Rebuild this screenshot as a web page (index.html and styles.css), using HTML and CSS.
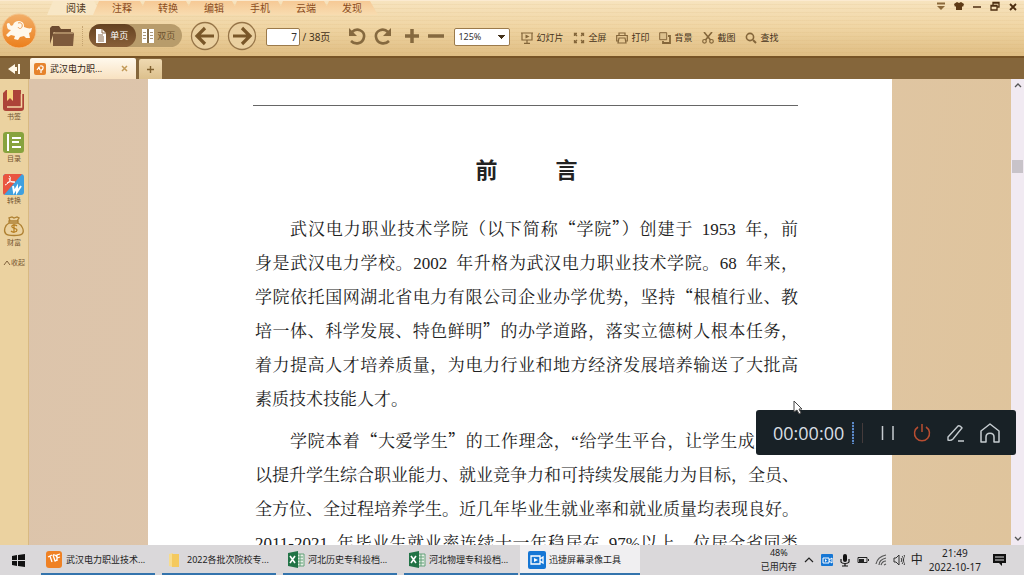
FILE: index.html
```html
<!DOCTYPE html>
<html lang="zh-CN">
<head>
<meta charset="utf-8">
<title>武汉电力职业技术学院</title>
<link rel="stylesheet" href="styles.css">
</head>
<body>
<div class="app">
  <header class="header">
    <button class="logo" aria-label="主菜单">
      <svg width="36" height="36" viewBox="0 0 36 36"><defs><linearGradient id="lg" x2="0" y2="1"><stop stop-color="#f2ae68"/><stop offset="1" stop-color="#ec7f1c"/></linearGradient></defs><circle cx="18" cy="18" r="17" fill="url(#lg)" stroke="#f3c48c"/><path fill="#fff8ec" d="M6 13c-1-3 2-4 3-2 0 2 2 2 3 1 1-4 6-5 9-3 2 1 2 3 2 5 3 1 5 2 8 1l-1 4-2 1 1 5-4 0-2-2-4 1-2 3-4-1 1-3-4-1-3 2-2-2 3-3 2-2c-2 0-4-1-4-4z"/><path d="M17 10c3-1 5 1 4 4-1 2-3 2-4 0" fill="none" stroke="#ee9a4d"/></svg>
    </button>
    <div class="header-main">
      <div class="title-row">
        <nav class="menu">
          <button class="menu-tab active">阅读</button><button class="menu-tab">注释</button><button class="menu-tab">转换</button><button class="menu-tab">编辑</button><button class="menu-tab">手机</button><button class="menu-tab">云端</button><button class="menu-tab">发现</button>
        </nav>
        <div class="window-buttons">
          <button aria-label="菜单"><svg width="10" height="10"><path d="M1 1.500h8v2H1zM1 5h8L5 9z" fill="#8c6a3c"/></svg></button>
          <button aria-label="换肤"><svg width="10" height="10"><path d="M3 1l2 1 2-1 3 2-1 3-1-1v4H2V5L1 6 0 3z" fill="#5d3a16"/></svg></button>
          <button aria-label="最小化"><svg width="10" height="10"><path d="M1 6h8" stroke="#4c2d10" stroke-width="1.500"/></svg></button>
          <button aria-label="还原"><svg width="10" height="10"><path d="M3 4V1.500h6V6H7M1 4.500h6V9H1zM1 5h6M3 2h6" fill="none" stroke="#4c2d10" stroke-width="1.300"/></svg></button>
          <button aria-label="关闭"><svg width="10" height="10"><path d="M2 3l6 6M8 3L2 9" stroke="#4c2d10" stroke-width="1.800"/></svg></button>
        </div>
      </div>
      <div class="toolbar">
        <button class="folder" aria-label="打开"><svg width="26" height="22"><path d="M1 19V3l2-2h7l2 3h10v3H5z" fill="#6d4b30"/><path d="M4 9l2-2h18l1 2-1 12H4z" fill="#7e5a3c"/><path d="M4 8h20" stroke="#d8b98a"/></svg></button>
        <span class="dots"></span>
        <div class="page-mode">
          <button class="mode on"><svg width="11" height="14"><path d="M0 0h6l4 4v10H0z" fill="#fff"/><path d="M6 0v4h4M2 6h5M2 8h6M2 10h6M2 12h6" fill="none" stroke="#8a6948"/></svg>单页</button>
          <button class="mode"><svg width="12" height="14"><path d="M0 0h5v14H0zM7 0h5v14H7z" fill="#fff"/><path d="M6 0v14" stroke="#4d3d28"/><path d="M1 3.500h3M1 6.500h3M1 9.500h3M8 3.500h3M8 6.500h3M8 9.500h3" stroke="#a8987c"/></svg>双页</button>
        </div>
        <button class="back" aria-label="上一页"><svg width="30" height="30"><circle cx="15" cy="15" r="13.500" fill="#ead0a0" stroke="#967548" stroke-width="1.300"/><path d="M24 15H8M15 7l-8 8 8 8" fill="none" stroke="#795729" stroke-width="3.200"/></svg></button>
        <button class="forward" aria-label="下一页"><svg width="30" height="30"><circle cx="15" cy="15" r="13.500" fill="#ead0a0" stroke="#967548" stroke-width="1.300"/><path d="M6 15h16M15 7l8 8-8 8" fill="none" stroke="#795729" stroke-width="3.200"/></svg></button>
        <label class="page-number"><input type="text" value="7" aria-label="页码"> / 38页</label>
        <button class="undo" aria-label="向左旋转"><svg width="18" height="18"><path d="M4 5c5-5 13-1 12 5-1 7-9 8-13 4" fill="none" stroke="#85693f" stroke-width="2.600"/><path d="M1 1v8h8z" fill="#85693f"/></svg></button>
        <button class="redo" aria-label="向右旋转"><svg width="18" height="18"><path d="M14 5C9 0 1 4 2 10c1 7 9 8 13 4" fill="none" stroke="#85693f" stroke-width="2.600"/><path d="M17 1v8H9z" fill="#85693f"/></svg></button>
        <button class="plus" aria-label="放大"><svg width="16" height="16"><path d="M1 8h14M8 1v14" stroke="#85693f" stroke-width="3.500"/></svg></button>
        <button class="minus" aria-label="缩小"><svg width="16" height="16"><path d="M0 8h16" stroke="#85693f" stroke-width="3.500"/></svg></button>
        <select class="zoom" aria-label="缩放"><option>125%</option></select>
        <div class="tools">
          <button><svg width="12" height="12"><path d="M0 1h12M1 1v7h10V1M6 8v3M3 11.300h6" fill="none" stroke="#84663a" stroke-width="1.200"/><path d="M4.500 2.500v4l4-2z" fill="#84663a"/></svg>幻灯片</button>
          <button><svg width="12" height="12"><path d="M4 1.500H1.500V4M8 1.500h2.500V4M4 10.500H1.500V8M8 10.500h2.500V8M2 2l2 2M10 2L8 4M2 10l2-2M10 10L8 8" fill="none" stroke="#84663a" stroke-width="1.300"/></svg>全屏</button>
          <button><svg width="12" height="12"><path d="M3 3V1h6v2M2 9H.700V3.500h10.600V9H10M3 6h6l1 5H2z" fill="none" stroke="#84663a" stroke-width="1.200"/></svg>打印</button>
          <button><svg width="12" height="12"><path d="M.700.700h7v7h-7z" fill="#dcc08d" stroke="#84663a"/><path d="M9 4h2v7H4V9" fill="none" stroke="#84663a" stroke-width="1.800"/></svg>背景</button>
          <button><svg width="12" height="12"><path d="M2 0l6.500 8M10 0L3.500 8" stroke="#84663a" stroke-width="1.600"/><circle cx="2.500" cy="9.300" r="1.800" fill="none" stroke="#84663a" stroke-width="1.200"/><circle cx="9.500" cy="9.300" r="1.800" fill="none" stroke="#84663a" stroke-width="1.200"/></svg>截图</button>
          <button><svg width="12" height="12"><circle cx="5" cy="5" r="3.600" fill="none" stroke="#84663a" stroke-width="1.600"/><path d="M8 8l3 3" stroke="#84663a" stroke-width="2"/></svg>查找</button>
        </div>
      </div>
    </div>
  </header>

  <div class="tab-bar">
    <button class="collapse" aria-label="收起侧栏"><svg width="13" height="12"><path d="M0 6l7-5v3h2v4H7v3zM10 1h2v10h-2z" fill="#fff8e8"/></svg></button>
    <div class="doc-tab"><svg width="12" height="12"><rect width="12" height="12" rx="2" fill="#e6832d"/><path d="M3 7l2-3 1 3M6 3c5-1 3 4 1 4v3" fill="none" stroke="#fff" stroke-width="1.200"/></svg><span>武汉电力职...</span><button aria-label="关闭标签"><svg width="7" height="7"><path d="M1 1l5 5M6 1L1 6" stroke="#c29a58" stroke-width="1.500"/></svg></button></div>
    <button class="new-tab" aria-label="新建标签"><svg width="9" height="9"><path d="M4.500 1v7M1 4.500h7" stroke="#806130" stroke-width="1.400"/></svg></button>
  </div>

  <main class="workspace">
    <aside class="sidebar">
      <button><svg width="22" height="22"><path d="M3 0h15v4h3v14a3 3 0 01-3 3H3a3 3 0 01-3-3V3z" fill="#ad4438"/><path d="M18.500 4v13H4" fill="none" stroke="#f5d7a5" stroke-width="1.500"/><path d="M4 0h6v11l-3-3-3 3z" fill="#f7d47f"/></svg>书签</button>
      <button><svg width="22" height="22"><rect width="21" height="21" rx="3" fill="#87a33e"/><path d="M5 2v17M9 6h9M9 10h7M9 15h9" stroke="#fff" stroke-width="2"/></svg>目录</button>
      <button><svg width="22" height="22"><rect width="21" height="21" rx="3" fill="#3fa0df"/><path d="M2 0h17L1 21l-1-2V2z" fill="#e95540"/><path d="M6 2c3 1 1 7-4 9M6 4c1 4 4 5 6 4-3-1-7 0-8 1" fill="none" stroke="#fff"/><path d="M10 12l1 6 3-5v5l4-6" fill="none" stroke="#fff" stroke-width="2"/></svg>转换</button>
      <button><svg width="22" height="22"><path d="M7 5L6 2l3-1 2 1 3-1 2 1-2 3M6 5h9v2H6zM6 7C2 9 0 15 3 18c2 2 14 2 16 0 3-3 0-9-4-11" fill="none" stroke="#ae8032" stroke-width="1.300"/><path d="M14 10c-2-2-6-1-5 1s5 1 5 3-4 3-6 1M11 8v9" fill="none" stroke="#b57d20" stroke-width="1.200"/></svg>财富</button>
      <button class="fold"><svg width="8" height="6"><path d="M1 5l3-4 3 4" fill="none" stroke="#80613c"/></svg>收起</button>
    </aside>
    <div class="canvas">
      <article class="page">
        <hr>
        <h1><span>前</span><span>言</span></h1>
        <p>
          <span class="line first">武汉电力职业技术学院（以下简称<q>“</q>学院<q>”</q>）创建于&ensp;1953&ensp;年，前</span>
          <span class="line">身是武汉电力学校。2002&ensp;年升格为武汉电力职业技术学院。68&ensp;年来，</span>
          <span class="line">学院依托国网湖北省电力有限公司企业办学优势，坚持<q>“</q>根植行业、教</span>
          <span class="line">培一体、科学发展、特色鲜明<q>”</q>的办学道路，落实立德树人根本任务，</span>
          <span class="line">着力提高人才培养质量，为电力行业和地方经济发展培养输送了大批高</span>
          <span class="line last">素质技术技能人才。</span>
        </p>
        <p>
          <span class="line first">学院本着<q>“</q>大爱学生<q>”</q>的工作理念，“给学生平台，让学生成人”，</span>
          <span class="line">以提升学生综合职业能力、就业竞争力和可持续发展能力为目标，全员、</span>
          <span class="line">全方位、全过程培养学生。近几年毕业生就业率和就业质量均表现良好。</span>
          <span class="line">2011-2021&ensp;年毕业生就业率连续十一年稳居在&ensp;97%以上，位居全省同类</span>
        </p>
      </article>
    </div>
    <div class="scrollbar">
      <svg width="13" height="12"><path d="M4 8l3-3 3 3" fill="none" stroke="#555" stroke-width="1.300"/></svg>
      <span class="thumb"></span>
      <svg width="13" height="12"><path d="M4 4l3 3 3-3" fill="none" stroke="#555" stroke-width="1.300"/></svg>
    </div>
  </main>

  <footer class="taskbar">
    <button class="start" aria-label="开始"><svg width="13" height="13"><path d="M0 2l5-1v5H0zM6 1l7-1v6H6zM0 7h5v5l-5-1zM6 7h7v6l-7-1z" fill="#111"/></svg></button>
    <div class="tasks">
      <button><svg width="18" height="18"><rect x="1" width="16" height="17" rx="3" fill="#ef8124"/><path d="M3 6l4-2M5 5l2 6M8 4l2 6c4-1 2-7-2-6M12 10V4l3-1M12 7l3-1" fill="none" stroke="#fff" stroke-width="1.300"/></svg>武汉电力职业技术...</button>
      <button><svg width="18" height="18"><path d="M3 3l4-1v14l-4-1z" fill="#f7dc8e"/><path d="M6 3h7v13H6z" fill="#f4c95e"/></svg>2022各批次院校专...</button>
      <button><svg width="18" height="18"><path d="M9 3h8v12H9z" fill="#e7f0e7" stroke="#63a078"/><path d="M10 6h6M10 9h6M10 12h6M13 3v12" stroke="#63a078"/><path d="M1 2l10-2v17L1 15z" fill="#217346"/><path d="M3 5l5 7M8 5l-5 7" stroke="#fff" stroke-width="1.600"/></svg>河北历史专科投档...</button>
      <button><svg width="18" height="18"><path d="M9 3h8v12H9z" fill="#e7f0e7" stroke="#63a078"/><path d="M10 6h6M10 9h6M10 12h6M13 3v12" stroke="#63a078"/><path d="M1 2l10-2v17L1 15z" fill="#217346"/><path d="M3 5l5 7M8 5l-5 7" stroke="#fff" stroke-width="1.600"/></svg>河北物理专科投档...</button>
      <button class="current"><svg width="18" height="18"><rect width="18" height="18" rx="2" fill="#1677d5"/><path d="M3 5h9v8H3zM12 8l3-2v6l-3-2" fill="none" stroke="#fff" stroke-width="1.300"/><path d="M6 7v4l4-2z" fill="#fff"/></svg>迅捷屏幕录像工具</button>
    </div>
    <div class="tray">
      <div class="stack memory"><span>48%</span><span>已用内存</span></div>
      <svg width="12" height="12"><path d="M2 8l4-4 4 4" fill="none" stroke="#222" stroke-width="1.200"/></svg>
      <svg width="12" height="12"><rect width="12" height="12" rx="1" fill="#1677d5"/><path d="M2 4h6v5H2zM8 6l3-2v5L8 7" fill="none" stroke="#fff"/><path d="M4 5v3l2-1.500z" fill="#fff"/></svg>
      <svg width="12" height="14"><rect x="4" y="1" width="4" height="8" rx="2" fill="#111"/><path d="M2 6v3c1 2 7 2 8 0V6M6 10v3M3 13h6" fill="none" stroke="#111" stroke-width="1.200"/></svg>
      <svg width="12" height="12"><path d="M1 3.500h9v5H1zM11.500 5v2" fill="none" stroke="#222"/><path d="M2 5h5v3H2z" fill="#222"/></svg>
      <svg width="12" height="12"><path d="M1 10C2 5 6 2 11 1M4 11c0-4 3-6 7-7M6 11c1-3 2-4 5-4M9 11l2-1" fill="none" stroke="#555" stroke-width="1.200"/></svg>
      <svg width="12" height="12"><path d="M1 4h2l3-3v10L3 8H1zM8 4c1 1 1 3 0 4M9 2c2 2 2 6 0 8M11 1c2 3 2 7 0 10" fill="none" stroke="#333"/></svg>
      <span class="ime">中</span>
      <div class="stack clock"><span>21:49</span><span>2022-10-17</span></div>
      <svg class="notice" width="13" height="14"><path d="M0 1h13v9H9v3l-3-3H0z" fill="#111"/><path d="M2 4h9M2 7h9" stroke="#ddd"/></svg>
    </div>
  </footer>
</div>

<div class="recorder">
  <span class="time">00:00:00</span>
  <span class="level"></span>
  <span class="separator"></span>
  <button aria-label="暂停"><svg width="22" height="22"><path d="M5.500 4v14M16 4v14" stroke="#c5ccd0" stroke-width="1.500"/></svg></button>
  <button aria-label="停止"><svg width="22" height="22"><path d="M7 5a7.500 7.500 0 1 0 8 0M11 2v8" fill="none" stroke="#b84d31" stroke-width="1.500"/></svg></button>
  <button aria-label="画笔"><svg width="22" height="22"><path d="M3 15L13 4q2-1 4 2L8 17q-2 2-5 1zM13 19h6" fill="none" stroke="#c5ccd0" stroke-width="1.400"/></svg></button>
  <button aria-label="主页"><svg width="22" height="22"><path d="M2 20V9l9-7 9 7v11h-5v-5c0-5-8-5-8 0v5z" fill="none" stroke="#c5ccd0" stroke-width="1.500" stroke-linejoin="round"/></svg></button>
</div>
<svg class="cursor" width="10" height="15"><path d="M1 1v11l3-2 2 4 2-1-2-4h3z" fill="#fff" stroke="#444"/></svg>
</body>
</html>
```
FILE: styles.css
```css
* { box-sizing: border-box; }
body {
  margin: 0;
  overflow: hidden;
  font: 9px/12px "Noto Sans", "Noto Sans CJK SC", sans-serif;
  color: #49351b;
}
button { border: 0; padding: 0; background: none; font: inherit; color: inherit; }
svg { display: block; flex: none; }

.app { display: grid; grid-template-rows: auto auto 1fr auto; height: 100vh; }

.header {
  display: flex;
  height: 56px;
  background:
    repeating-linear-gradient(#0000 0 3px, #c99c5518 3px 4px),
    linear-gradient(#f7e3be, #f0d6a5 45%, #dfbd83);
  border-top: 1px solid #fbead0;
}
.logo { align-self: flex-end; padding: 0 0 7px 1px; width: 49px; }
.header-main { flex: 1; display: flex; flex-direction: column; }
.title-row { display: flex; justify-content: space-between; height: 14px; }
.menu { display: flex; padding-left: 4px; isolation: isolate; }
.menu-tab { position: relative; width: 46px; font-size: 10px; line-height: 14px; color: #8b4d1e; }
.menu-tab::before {
  content: "";
  position: absolute;
  inset: 0 -6px;
  z-index: -1;
  background: linear-gradient(#f6c995, #f8dcb0);
  clip-path: polygon(6px 0, 47px 0, 55px 100%, 0 100%);
}
.menu-tab.active { color: #4d3518; }
.menu-tab.active::before { background: #f8e7c6; }
.window-buttons { display: flex; gap: 8px; padding-right: 6px; align-items: flex-start; }

.toolbar { display: flex; align-items: center; height: 41px; color: #443119; }
.dots { height: 20px; border-left: 1px dotted #c5a471; margin: 0 6px 0 7px; }
.page-mode { display: flex; width: 93px; height: 23px; border-radius: 12px; background: #b89c6b; color: #6d522d; }
.mode { display: flex; flex: 1; align-items: center; justify-content: center; gap: 3px; border-radius: 12px; }
.mode.on { background: linear-gradient(#644221, #896039); color: #fff; }
.back { margin-left: 8px; }
.forward { margin-left: 7px; }
.page-number { display: flex; align-items: center; margin-left: 9px; padding-top: 3px; font-size: 10px; white-space: pre; }
.page-number input {
  width: 34px;
  height: 18px;
  padding: 0 2px;
  border: 1px solid #9b7a4b;
  border-radius: 2px;
  background: #fff;
  font: inherit;
  color: #333;
  text-align: right;
}
.undo { margin-left: 18px; }
.redo { margin-left: 8px; }
.plus { margin-left: 12px; }
.minus { margin-left: 8px; }
.zoom {
  appearance: none;
  width: 56px;
  height: 18px;
  margin: 3px 0 0 10px;
  padding: 0 3px;
  border: 1px solid #9b7a4b;
  border-radius: 2px;
  background:
    linear-gradient(135deg, #443119 50%, #0000 50%) no-repeat right 3px center / 4px 4px,
    linear-gradient(225deg, #443119 50%, #0000 50%) no-repeat right 7px center / 4px 4px,
    #fff;
  font: inherit;
  color: #333;
}
.tools { display: flex; gap: 10px; margin-left: 11px; padding-top: 4px; }
.tools button { display: flex; align-items: center; gap: 3px; white-space: nowrap; }

.tab-bar { display: flex; align-items: flex-end; height: 23px; background: #85663b; border-top: 2px solid #765326; }
.collapse { width: 30px; height: 20px; padding-left: 8px; }
.doc-tab {
  display: flex;
  align-items: center;
  gap: 4px;
  width: 106px;
  height: 21px;
  padding: 0 8px 0 4px;
  border-radius: 2px 2px 0 0;
  background: linear-gradient(#fff9ed, #f8e1c0);
  color: #332414;
}
.doc-tab span { flex: 1; white-space: nowrap; }
.new-tab { display: grid; place-items: center; width: 23px; height: 20px; margin-left: 3px; border-radius: 2px 2px 0 0; background: linear-gradient(#efd9b1, #dcc08c); }

.workspace { display: flex; min-height: 0; overflow: hidden; }
.sidebar { display: flex; flex-direction: column; align-items: center; gap: 10px; width: 29px; padding-top: 11px; background: #ebd2a0; border-right: 1px solid #d8b982; }
.sidebar button { display: flex; flex-direction: column; align-items: center; font-size: 7px; line-height: 10px; color: #745530; white-space: nowrap; }
.sidebar .fold { flex-direction: row; }
.canvas {
  flex: 1;
  display: flex;
  padding: 0 119px;
  background: linear-gradient(100deg, #dcc4ab, #e0c7aa 50%, #dfc49c);
  overflow: hidden;
}
.page {
  flex: 1;
  min-width: 0;
  padding: 26px 94px 0 107px;
  background: #fff;
  font: 400 17px/34px "Liberation Serif", "Noto Serif CJK SC", "Noto Sans CJK SC", serif;
  color: #222;
}
.page hr { height: 1px; margin: 0 0 0 -2px; border: 0; background: #666; }
.page h1 { display: flex; justify-content: center; gap: 58px; margin: 45px 0 28px; font: 700 22px/34px "Noto Sans CJK SC", sans-serif; }
.page p { margin: 0 0 8px; }
.line { display: block; height: 34px; white-space: nowrap; text-align: justify; text-align-last: justify; }
.line.first { padding-left: 35px; }
.line.last { text-align-last: left; }
.line q { quotes: none; font-family: "Noto Sans CJK SC", sans-serif; line-height: 1; }

.scrollbar { display: flex; flex-direction: column; justify-content: space-between; width: 13px; background: #f1eaf2; }
.thumb { height: 13px; margin: -291px 1px 0; background: #c8c3c9; }

.taskbar { display: flex; height: 30px; background: #dad8da; color: #222; }
.start { width: 41px; padding-left: 12px; }
.tasks { display: flex; gap: 7px; }
.tasks button { display: flex; align-items: center; gap: 3px; width: 114px; padding: 1px 4px 0; border-bottom: 2px solid #3474ad; white-space: nowrap; }
.tasks .current { width: 120px; margin-left: -5px; padding-left: 8px; background: #f0eff1; }
.tray { display: flex; align-items: center; gap: 6px; margin-left: auto; padding-right: 18px; }
.stack { display: flex; flex-direction: column; align-items: center; line-height: 14px; white-space: nowrap; }
.clock { font-size: 10px; }
.ime { font-size: 12px; }
.notice { margin-left: 6px; }

.recorder {
  position: absolute;
  right: 8px;
  bottom: 120px;
  display: flex;
  align-items: center;
  width: 260px;
  height: 45px;
  padding: 0 15px 0 17px;
  border-radius: 3px;
  background: #182126;
  color: #d9dfe4;
}
.time { font: 400 18px/24px "Open Sans", sans-serif; }
.level { width: 4px; height: 22px; margin-left: 8px; background: repeating-linear-gradient(#5b89c7 0 2px, #243449 2px 3px); }
.separator { width: 1px; height: 20px; margin: 0 14px 0 8px; background: #443b3b; }
.recorder button { margin-right: 12px; }
.recorder button:last-child { margin: 0; }
.cursor { position: absolute; left: 793px; top: 400px; }
```
